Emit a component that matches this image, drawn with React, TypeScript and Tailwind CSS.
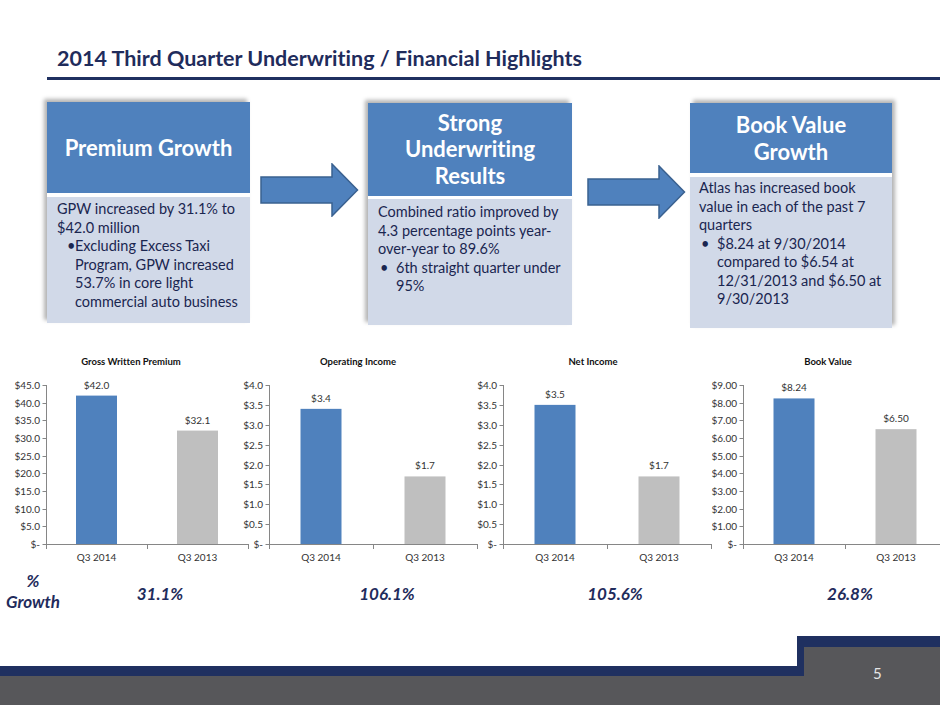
import React from "react";

type ChartProps = {
  w: number;
  axisX: number;
  catW: number;
  titleX: number;
  title: string;
  ticks: string[];
  max: number;
  values: [number, number];
  valueLabels: [string, string];
};

function Chart({ w, axisX, catW, titleX, title, ticks, max, values, valueLabels }: ChartProps) {
  const top = 35;
  const zero = 194;
  const h = zero - top;
  const y = (v: number) => zero - (h * v) / max;
  const n = ticks.length;
  const ax = axisX + 0.5;
  const colors = ["#4f81bd", "#bfbfbf"];
  const cats = ["Q3 2014", "Q3 2013"];
  return (
    <svg width={w} height={218} className="shrink-0 overflow-visible">
      <text x={titleX} y={15} textAnchor="middle" fontSize="9.5" fontWeight="700" fill="#111">
        {title}
      </text>
      {ticks.map((t, i) => {
        const ty = Math.round(top + (h * i) / (n - 1)) + 0.5;
        return (
          <g key={t}>
            <line x1={ax - 4} x2={ax} y1={ty} y2={ty} stroke="#868686" />
            <text x={axisX - 6} y={ty + 3.5} textAnchor="end" fontSize="10" fill="#333">
              {t}
            </text>
          </g>
        );
      })}
      {values.map((v, k) => {
        const cx = axisX + catW * (k + 0.5);
        const by = y(v);
        return (
          <g key={k}>
            <rect x={cx - 20.5} y={by} width={41} height={zero - by} fill={colors[k]} />
            <text x={cx} y={by - 7} textAnchor="middle" fontSize="10" fill="#333">
              {valueLabels[k]}
            </text>
            <text x={cx} y={211} textAnchor="middle" fontSize="10" fill="#333">
              {cats[k]}
            </text>
          </g>
        );
      })}
      <line x1={ax} x2={ax} y1={top} y2={zero + 0.5} stroke="#868686" />
      <line x1={ax} x2={ax + 2 * catW} y1={zero + 0.5} y2={zero + 0.5} stroke="#868686" />
      {[0, 1, 2].map((k) => (
        <line
          key={k}
          x1={Math.round(axisX + k * catW) + 0.5}
          x2={Math.round(axisX + k * catW) + 0.5}
          y1={zero}
          y2={zero + 5}
          stroke="#868686"
        />
      ))}
    </svg>
  );
}

function Arrow() {
  return (
    <svg width="99" height="54" viewBox="0 0 99 54" className="shrink-0">
      <path
        d="M1 14 H72 V1 L97.5 27 L72 53 V40 H1 Z"
        fill="#4f81bd"
        stroke="#3a6190"
        strokeWidth="1.5"
      />
    </svg>
  );
}

function Bullet({ wide, lines }: { wide?: boolean; lines: string[] }) {
  return (
    <div>
      <div className="flex">
        <span className={`inline-block w-[18px] shrink-0 ${wide ? "pl-[10px]" : "pl-[2px]"}`}>•</span>
        <span>{lines[0]}</span>
      </div>
      {lines.slice(1).map((l) => (
        <div key={l} className="pl-[18px]">
          {l}
        </div>
      ))}
    </div>
  );
}

export default function App() {
  return (
    <div className="relative flex h-[705px] w-[940px] flex-col overflow-hidden bg-white font-['Lato',sans-serif] [font-variant-ligatures:none]">
      {/* Title */}
      <div className="pl-[57px] pt-[45px] text-[21.5px] font-bold leading-[26px] text-[#1f2c5c] whitespace-nowrap">
        2014 Third Quarter Underwriting / Financial Highlights
      </div>
      <div className="ml-[47px] mt-[6px] h-[3px] bg-[#1f3060]" />

      {/* Highlight boxes */}
      <div className="mt-[22px] flex items-start">
        {/* Box 1 */}
        <div className="ml-[47px] flex w-[203px] shrink-0 flex-col gap-[4px] bg-white shadow-[-3px_-3px_4px_rgba(0,0,0,0.3)]">
          <div className="flex h-[91px] items-center justify-center bg-[#4f81bd] text-[22px] font-bold text-white">
            Premium Growth
          </div>
          <div className="h-[126px] bg-[#d1d9e8] pl-[10px] pt-[3px] text-[14.5px] leading-[18.5px] text-[#1a2650] whitespace-nowrap">
            <div>GPW increased by 31.1% to</div>
            <div>$42.0 million</div>
            <Bullet
              wide
              lines={[
                "Excluding Excess Taxi",
                "Program, GPW increased",
                "53.7% in core light",
                "commercial auto business",
              ]}
            />
          </div>
        </div>

        <div className="ml-[10px] mt-[61px] w-[108px] shrink-0">
          <Arrow />
        </div>

        {/* Box 2 */}
        <div className="mt-[1px] flex w-[204px] shrink-0 flex-col gap-[3px] bg-white shadow-[-3px_-3px_4px_rgba(0,0,0,0.3)]">
          <div className="flex h-[93px] flex-col items-center justify-center bg-[#4f81bd] text-center text-[22px] font-bold leading-[26.5px] text-white">
            <div>Strong</div>
            <div>Underwriting</div>
            <div>Results</div>
          </div>
          <div className="h-[126px] bg-[#d1d9e8] pl-[10px] pt-[4px] text-[14.5px] leading-[18.5px] text-[#1a2650] whitespace-nowrap">
            <div>Combined ratio improved by</div>
            <div>4.3 percentage points year-</div>
            <div>over-year to 89.6%</div>
            <Bullet lines={["6th straight quarter under", "95%"]} />
          </div>
        </div>

        <div className="ml-[15px] mt-[63px] w-[103px] shrink-0">
          <Arrow />
        </div>

        {/* Box 3 */}
        <div className="mt-[1px] flex w-[202px] shrink-0 flex-col gap-[4px] bg-white shadow-[3px_-3px_4px_rgba(0,0,0,0.3)]">
          <div className="flex h-[70px] flex-col items-center justify-center bg-[#4f81bd] text-center text-[22px] font-bold leading-[27px] text-white">
            <div>Book Value</div>
            <div>Growth</div>
          </div>
          <div className="h-[151px] bg-[#d1d9e8] pl-[9px] pt-[2px] text-[14.5px] leading-[18.5px] text-[#1a2650] whitespace-nowrap">
            <div>Atlas has increased book</div>
            <div>value in each of the past 7</div>
            <div>quarters</div>
            <Bullet
              lines={[
                "$8.24 at 9/30/2014",
                "compared to $6.54 at",
                "12/31/2013 and $6.50 at",
                "9/30/2013",
              ]}
            />
          </div>
        </div>
      </div>

      {/* Charts */}
      <div className="mt-[22px] flex">
        <Chart
          w={230}
          axisX={46}
          catW={101}
          titleX={131}
          title="Gross Written Premium"
          ticks={["$45.0", "$40.0", "$35.0", "$30.0", "$25.0", "$20.0", "$15.0", "$10.0", "$5.0", "$-"]}
          max={45}
          values={[42.0, 32.1]}
          valueLabels={["$42.0", "$32.1"]}
        />
        <Chart
          w={230}
          axisX={39}
          catW={104}
          titleX={128}
          title="Operating Income"
          ticks={["$4.0", "$3.5", "$3.0", "$2.5", "$2.0", "$1.5", "$1.0", "$0.5", "$-"]}
          max={4}
          values={[3.4, 1.7]}
          valueLabels={["$3.4", "$1.7"]}
        />
        <Chart
          w={230}
          axisX={43}
          catW={104}
          titleX={133}
          title="Net Income"
          ticks={["$4.0", "$3.5", "$3.0", "$2.5", "$2.0", "$1.5", "$1.0", "$0.5", "$-"]}
          max={4}
          values={[3.5, 1.7]}
          valueLabels={["$3.5", "$1.7"]}
        />
        <Chart
          w={250}
          axisX={53}
          catW={102}
          titleX={138}
          title="Book Value"
          ticks={["$9.00", "$8.00", "$7.00", "$6.00", "$5.00", "$4.00", "$3.00", "$2.00", "$1.00", "$-"]}
          max={9}
          values={[8.24, 6.5]}
          valueLabels={["$8.24", "$6.50"]}
        />
      </div>

      {/* Growth row */}
      <div className="mt-[2px] flex text-[17px] font-bold italic leading-[21px] text-[#1f2c5c]">
        <div className="w-[66px] shrink-0 text-center">
          <div>%</div>
          <div>Growth</div>
        </div>
        <div className="w-[188px] shrink-0 pt-[13px] text-center">31.1%</div>
        <div className="w-[266px] shrink-0 pt-[13px] text-center">106.1%</div>
        <div className="w-[190px] shrink-0 pt-[13px] text-center">105.6%</div>
        <div className="ml-[50px] w-[180px] shrink-0 pt-[13px] text-center">26.8%</div>
      </div>

      {/* Footer */}
      <div className="mt-auto flex h-[69px]">
        <div className="flex w-[797px] shrink-0 flex-col">
          <div className="h-[30px] bg-white" />
          <div className="h-[10px] bg-[#1f3060]" />
          <div className="flex-1 bg-[#57575a]" />
        </div>
        <div className="flex flex-1 flex-col bg-[#57575a]">
          <div className="h-[11px] bg-[#1f3060]" />
          <div className="flex flex-1">
            <div className="h-[29px] w-[7px] bg-[#1f3060]" />
            <div className="pl-[69px] pt-[18px] text-[15px] leading-[16px] text-[#e6e6e6]">5</div>
          </div>
        </div>
      </div>
    </div>
  );
}
